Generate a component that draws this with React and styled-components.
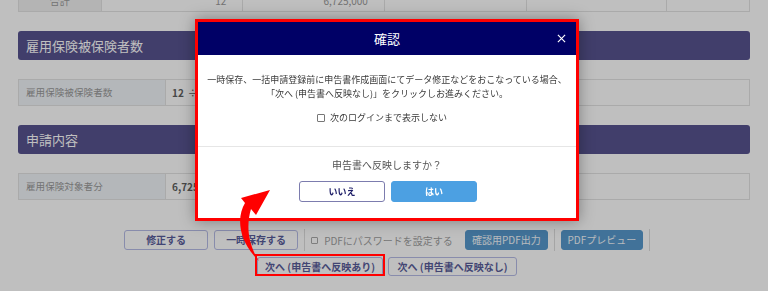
import React from 'react'
import styled, { createGlobalStyle } from 'styled-components'

const GlobalStyle = createGlobalStyle`
  html, body {
    margin: 0;
    padding: 0;
    background: #fff;
    overflow: hidden;
  }
  body {
    font-family: "Noto Sans CJK JP", "Noto Sans", sans-serif;
    color: #333;
  }
`

const Page = styled.div`
  width: 732px;
  margin: -9px 0 0 18px;
`

const SummaryRow = styled.div`
  display: flex;
  border: 1px solid #e3e3e3;
  border-top: none;
`

const SummaryCell = styled.div`
  width: ${(p) => p.width}px;
  height: 20px;
  line-height: 20px;
  font-size: 10px;
  color: #9a9a9a;
  text-align: ${(p) => (p.head ? 'center' : 'right')};
  padding: 0 ${(p) => (p.head ? 0 : 16)}px;
  box-sizing: border-box;
  background: ${(p) => (p.head ? '#f1f1f1' : '#fff')};
  border-left: ${(p) => (p.first ? 'none' : '1px solid #e3e3e3')};
`

const SectionTitle = styled.h2`
  margin: 19px 0 0;
  height: 29px;
  line-height: 29px;
  padding-left: 8px;
  border-radius: 3px;
  background: #57538f;
  color: #fff;
  font-size: 13px;
  font-weight: 400;
`

const FieldRow = styled.div`
  display: flex;
  margin-top: 19px;
  height: 27px;
  border: 1px solid #e3e3e3;
  box-sizing: border-box;
`

const FieldLabel = styled.div`
  width: 147px;
  padding-left: 7px;
  box-sizing: border-box;
  background: #f1f5f9;
  border-right: 1px solid #e3e3e3;
  color: #9a9a9a;
  font-size: 9.6px;
  line-height: 25px;
`

const FieldValue = styled.div`
  flex: 1;
  padding-left: 6px;
  color: #5f5f5f;
  font-weight: 700;
  font-size: 10px;
  line-height: 25px;
`

const Spin = styled.span`
  font-weight: 400;
  margin-left: 4px;
`

const Actions = styled.div`
  display: flex;
  flex-direction: column;
  align-items: center;
  gap: 6px;
  margin-top: 29px;
  padding-left: 6px;
`

const ActionRow = styled.div`
  display: flex;
  align-items: center;
  gap: ${(p) => p.gap || 6}px;
`

const Button = styled.button`
  width: ${(p) => p.width}px;
  height: ${(p) => p.height || 20}px;
  padding: 0;
  border-radius: 3px;
  font-family: inherit;
  font-size: 10px;
  line-height: 1;
  cursor: pointer;
  background: ${(p) => (p.primary ? '#5799cd' : '#fff')};
  border: 1px solid ${(p) => (p.primary ? '#5799cd' : '#b6bbe6')};
  color: ${(p) => (p.primary ? '#f4f8fc' : '#585c9a')};
  font-weight: ${(p) => (p.primary ? 400 : 700)};
`

const Divider = styled.span`
  width: 1px;
  height: 22px;
  background: #dcdcdc;
`

const CheckLabel = styled.label`
  display: flex;
  align-items: center;
  gap: 6px;
  margin-right: 6px;
  font-size: 10px;
  color: #a0a0a0;
`

const Check = styled.input.attrs({ type: 'checkbox' })`
  appearance: none;
  margin: 0;
  width: ${(p) => p.size || 8}px;
  height: ${(p) => p.size || 8}px;
  border: 1px solid ${(p) => p.tone || '#a8a8a8'};
  border-radius: 1px;
  background: #fff;
`

const Backdrop = styled.div`
  position: fixed;
  inset: 0;
  background: rgba(0, 0, 0, 0.25);
  z-index: 10;
`

const Dialog = styled.div`
  position: absolute;
  left: 195px;
  top: 19px;
  width: 384px;
  border: 3px solid #ff0000;
  box-sizing: border-box;
  background: #fff;
  box-shadow: 0 0 14px rgba(0, 0, 0, 0.35);
  z-index: 20;
`

const DialogHeader = styled.div`
  position: relative;
  height: 33px;
  background: #000066;
  color: #fff;
  font-size: 13px;
  line-height: 33px;
  text-align: center;
`

const Close = styled.button`
  position: absolute;
  right: 8px;
  top: 10px;
  width: 13px;
  height: 13px;
  padding: 0;
  border: none;
  background: none;
  display: flex;
  align-items: center;
  justify-content: center;
`

const DialogBody = styled.div`
  padding: 18px 0 21px;
  border-bottom: 1px solid #e6e6e6;
  text-align: center;
  font-size: 9px;
  line-height: 14px;
  color: #3a3a3a;
`

const Note = styled.label`
  display: flex;
  align-items: center;
  justify-content: center;
  gap: 5px;
  margin-top: 10px;
  padding-right: 10px;
`

const DialogFooter = styled.div`
  padding: 11px 0 16px;
  text-align: center;
`

const Question = styled.p`
  margin: 0;
  font-size: 10px;
  line-height: 14px;
  color: #555;
`

const Choices = styled.div`
  display: flex;
  justify-content: center;
  gap: 6px;
  margin-top: 9px;
  padding-left: 2px;
`

const Choice = styled.button`
  width: 86px;
  height: 21px;
  padding: 0;
  border-radius: 3px;
  font-family: inherit;
  font-size: 9px;
  font-weight: 700;
  background: ${(p) => (p.yes ? '#4ca0e2' : '#fff')};
  border: 1px solid ${(p) => (p.yes ? '#4ca0e2' : '#7c7cae')};
  color: ${(p) => (p.yes ? '#fff' : '#1c1c66')};
`

const Highlight = styled.div`
  position: absolute;
  left: 255px;
  top: 254px;
  width: 130px;
  height: 22px;
  border: 2px solid #ff0000;
  box-sizing: border-box;
  z-index: 30;
`

const Pointer = styled.svg`
  position: absolute;
  left: 0;
  top: 0;
  z-index: 30;
  pointer-events: none;
`

const summary = [
  { width: 82, text: '合計', head: true },
  { width: 142, text: '12' },
  { width: 142, text: '6,725,000' },
  { width: 142, text: '' },
  { width: 141, text: '' },
  { width: 83, text: '' },
]

export default function App() {
  return (
    <>
      <GlobalStyle />
      <Page>
        <SummaryRow>
          {summary.map((c, i) => (
            <SummaryCell key={i} width={c.width} head={c.head} first={i === 0}>
              {c.text}
            </SummaryCell>
          ))}
        </SummaryRow>

        <SectionTitle>雇用保険被保険者数</SectionTitle>
        <FieldRow>
          <FieldLabel>雇用保険被保険者数</FieldLabel>
          <FieldValue>12<Spin>÷</Spin></FieldValue>
        </FieldRow>

        <SectionTitle>申請内容</SectionTitle>
        <FieldRow>
          <FieldLabel>雇用保険対象者分</FieldLabel>
          <FieldValue>6,725,000</FieldValue>
        </FieldRow>

        <Actions>
          <ActionRow>
            <Button width={84}>修正する</Button>
            <Button width={84}>一時保存する</Button>
            <Divider />
            <CheckLabel>
              <Check size={7} />
              PDFにパスワードを設定する
            </CheckLabel>
            <Button primary width={83}>確認用PDF出力</Button>
            <Divider />
            <Button primary width={82}>PDFプレビュー</Button>
            <Divider />
          </ActionRow>
          <ActionRow gap={5}>
            <Button width={126} height={19}>次へ (申告書へ反映あり)</Button>
            <Button width={129} height={19}>次へ (申告書へ反映なし)</Button>
          </ActionRow>
        </Actions>
      </Page>

      <Backdrop />

      <Dialog>
        <DialogHeader>
          確認
          <Close aria-label="閉じる">
            <svg width="9" height="9" viewBox="0 0 10 10">
              <path d="M1 1 L9 9 M9 1 L1 9" stroke="#fff" strokeWidth="1.3" />
            </svg>
          </Close>
        </DialogHeader>
        <DialogBody>
          一時保存、一括申請登録前に申告書作成画面にてデータ修正などをおこなっている場合、
          <br />
          「次へ (申告書へ反映なし)」をクリックしお進みください。
          <Note>
            <Check size={8} tone="#777" />
            次のログインまで表示しない
          </Note>
        </DialogBody>
        <DialogFooter>
          <Question>申告書へ反映しますか？</Question>
          <Choices>
            <Choice>いいえ</Choice>
            <Choice yes>はい</Choice>
          </Choices>
        </DialogFooter>
      </Dialog>

      <Highlight />
      <Pointer width="768" height="291" viewBox="0 0 768 291">
        <path
          d="M270 190 L241 198 L245 203 C237 216 237 240 259 261 C248 244 246 226 251 209 L256 215 Z"
          fill="#ff0000"
        />
      </Pointer>
    </>
  )
}
